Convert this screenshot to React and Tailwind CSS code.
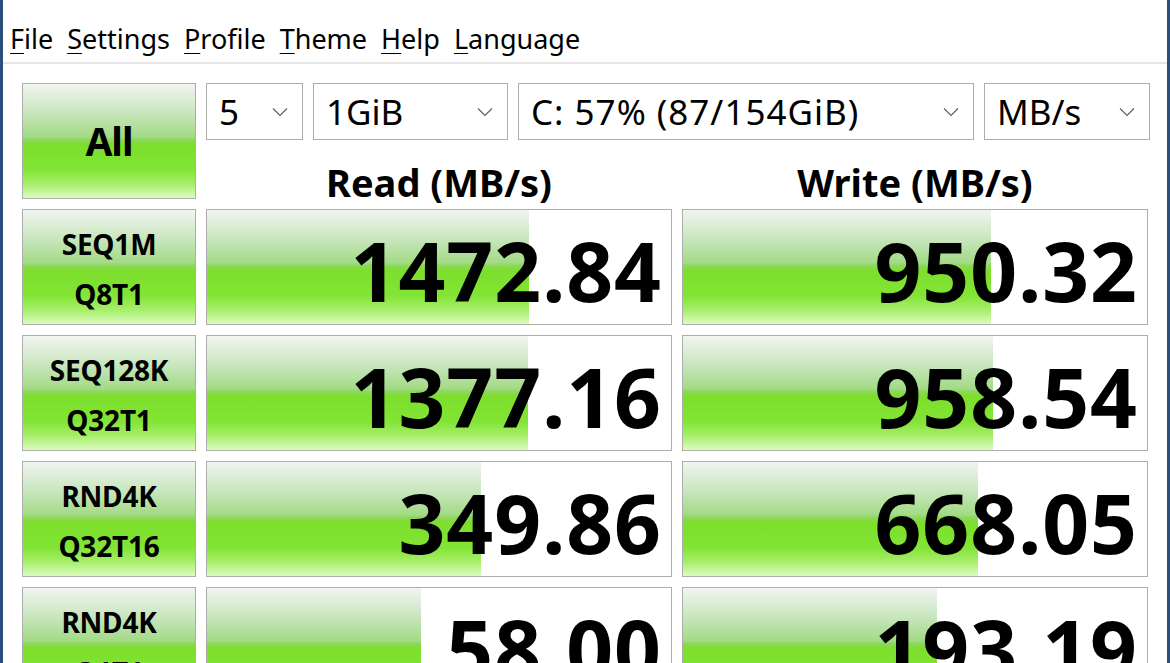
import React from "react";

const rows = [
  { a: "SEQ1M", b: "Q8T1", read: "1472.84", write: "950.32", rw: 322, ww: 308 },
  { a: "SEQ128K", b: "Q32T1", read: "1377.16", write: "958.54", rw: 321, ww: 310 },
  { a: "RND4K", b: "Q32T16", read: "349.86", write: "668.05", rw: 274, ww: 295 },
  { a: "RND4K", b: "Q1T1", read: "58.00", write: "193.19", rw: 214, ww: 254 },
];

const green =
  "bg-[linear-gradient(to_bottom,#f1f5f1_0%,#c9e6be_25%,#a3db86_46%,#8cd75a_49%,#7ddf2c_53%,#82e434_75%,#a8ef6c_88%,#dcfcc0_100%)]";

function Menu({ children }) {
  const [first, ...rest] = children;
  return (
    <span>
      <span className="underline decoration-1 underline-offset-[4px]">{first}</span>
      {rest.join("")}
    </span>
  );
}

function Select({ value, w, track = "" }) {
  return (
    <div
      className={`${w} h-[57px] shrink-0 border border-[#adadad] bg-white flex items-center justify-between pl-[12px] pr-[14px]`}
    >
      <span className={`text-[35px] text-black leading-none ${track}`}>{value}</span>
      <svg width="16" height="10" viewBox="0 0 16 10">
        <path d="M1 1.5 L8 8.5 L15 1.5" fill="none" stroke="#606060" strokeWidth="1.2" />
      </svg>
    </div>
  );
}

function Result({ value, width }) {
  return (
    <div className="relative w-[466px] h-[116px] shrink-0 border border-[#adadad] bg-white overflow-hidden">
      <div className={`absolute left-0 top-0 bottom-0 ${green}`} style={{ width }} />
      <div className="relative h-full flex items-center justify-end pr-[9px] pt-[6px]">
        <span className="text-[82px] font-bold leading-none tracking-[1px] text-black whitespace-nowrap">
          {value}
        </span>
      </div>
    </div>
  );
}

export default function App() {
  return (
    <div
      className="w-[1170px] h-[663px] overflow-hidden bg-white border-x-[3px] border-[#2b4f7a]"
      style={{ fontFamily: '"Noto Sans", "Open Sans", sans-serif' }}
    >
      <div className="h-[62px] flex items-center pt-[16px] pl-[7px] gap-[14px] text-[27px] text-black">
        <Menu>File</Menu>
        <Menu>Settings</Menu>
        <Menu>Profile</Menu>
        <Menu>Theme</Menu>
        <Menu>Help</Menu>
        <Menu>Language</Menu>
      </div>
      <div className="h-[2px] bg-[#e6e6e6]" />
      <div className="pl-[19px] pt-[19px]">
        <div className="flex gap-[10px]">
          <div
            className={`w-[174px] h-[116px] shrink-0 border border-[#adadad] ${green} flex items-center justify-center`}
          >
            <span className="text-[39px] font-bold text-black tracking-[-1px]">All</span>
          </div>
          <div className="flex flex-col">
            <div className="flex gap-[10px]">
              <Select value="5" w="w-[97px]" />
              <Select value="1GiB" w="w-[195px]" />
              <Select value="C: 57% (87/154GiB)" w="w-[456px]" track="tracking-[1px]" />
              <Select value="MB/s" w="w-[166px]" />
            </div>
            <div className="flex gap-[10px] h-[59px] items-center pt-[24px]">
              <div className="w-[466px] text-center text-[38px] font-bold leading-none text-black">Read (MB/s)</div>
              <div className="w-[466px] text-center text-[38px] font-bold leading-none text-black">Write (MB/s)</div>
            </div>
          </div>
        </div>
        <div className="flex flex-col gap-[10px] mt-[10px]">
          {rows.map((r, i) => (
            <div key={i} className="flex gap-[10px] shrink-0">
              <div
                className={`w-[174px] h-[116px] shrink-0 border border-[#adadad] ${green} flex flex-col items-center justify-center gap-[22px] pt-[4px]`}
              >
                <span className="text-[28px] font-bold leading-none tracking-[-0.2px] text-black">{r.a}</span>
                <span className="text-[28px] font-bold leading-none tracking-[-0.2px] text-black">{r.b}</span>
              </div>
              <Result value={r.read} width={r.rw} />
              <Result value={r.write} width={r.ww} />
            </div>
          ))}
        </div>
      </div>
    </div>
  );
}
